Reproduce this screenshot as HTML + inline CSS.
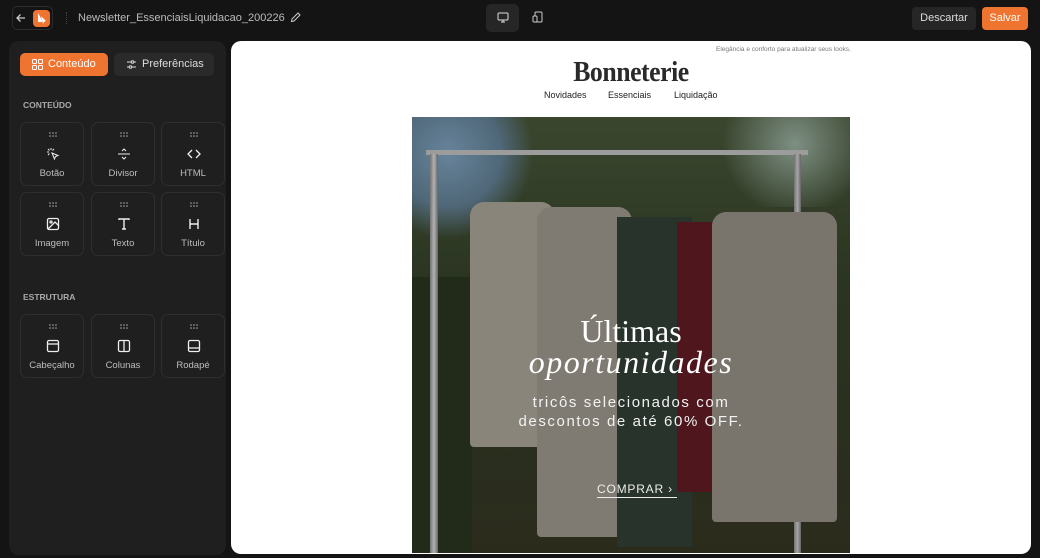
<!DOCTYPE html>
<html><head><meta charset="utf-8"><style>
*{box-sizing:border-box;margin:0;padding:0}
body{width:1040px;height:558px;background:#141414;font-family:"Liberation Sans",sans-serif;position:relative;overflow:hidden;color:#ddd}
.abs{position:absolute}
.tile{position:absolute;width:64px;height:64px;border:1px solid #2e2e2e;border-radius:7px;text-align:center;font-size:9.5px;color:#bdbdbd}
.tile .d{position:absolute;top:9px;left:28px}
.tile svg.i{position:absolute;top:24px;left:25px}
.tile .l{position:absolute;top:45px;left:0;right:0}
.sec{position:absolute;left:23px;font-size:8.5px;font-weight:bold;color:#aaa}
</style></head><body>
<svg width="0" height="0" style="position:absolute"><defs><g id="dots" fill="#aaa"><circle cx="1" cy="1" r=".8"/><circle cx="4" cy="1" r=".8"/><circle cx="7" cy="1" r=".8"/><circle cx="1" cy="4" r=".8"/><circle cx="4" cy="4" r=".8"/><circle cx="7" cy="4" r=".8"/></g></defs></svg>
<!-- top bar -->
<div class="abs" style="left:12px;top:6px;width:41px;height:24px;border:1px solid #2c2c2c;border-radius:5px"></div>
<svg class="abs" style="left:15px;top:12px" width="12" height="12" viewBox="0 0 12 12"><path d="M10 6H2M5.5 2.5L2 6l3.5 3.5" stroke="#ccc" stroke-width="1.3" fill="none"/></svg>
<div class="abs" style="left:33px;top:10px;width:17px;height:17px;background:#ee7430;border-radius:4px"></div>
<svg class="abs" style="left:36px;top:12px" width="12" height="13" viewBox="0 0 12 13"><path d="M2 1v9h5M5 4l5 5-2 1-1 2z" fill="#fff"/></svg>
<div class="abs" style="left:66px;top:12px;width:1px;height:12px;border-left:1px dotted #444"></div>
<div class="abs" style="left:78px;top:12px;font-size:11px;color:#bbb">Newsletter_EssenciaisLiquidacao_200226</div>
<svg class="abs" style="left:290px;top:12px" width="11" height="11" viewBox="0 0 11 11"><path d="M1.5 9.5l.5-2.5 6-6 2 2-6 6z" stroke="#ccc" fill="none"/></svg>
<div class="abs" style="left:486px;top:4px;width:33px;height:28px;background:#262626;border-radius:5px"></div>
<svg class="abs" style="left:497px;top:12px" width="12" height="11" viewBox="0 0 12 11"><rect x="1" y="1" width="10" height="7" rx="1" stroke="#ddd" fill="none"/><path d="M6 8v2M4 10h4" stroke="#ddd"/></svg>
<svg class="abs" style="left:532px;top:11px" width="11" height="12" viewBox="0 0 11 12"><rect x="3" y="1" width="7" height="10" rx="1" stroke="#ccc" fill="none"/><rect x="1" y="5" width="4" height="6" rx="1" stroke="#ccc" fill="#141414"/></svg>
<div class="abs" style="left:912px;top:7px;width:64px;height:23px;background:#262626;border-radius:4px;font-size:11px;color:#ddd;text-align:center;line-height:23px">Descartar</div>
<div class="abs" style="left:982px;top:7px;width:46px;height:23px;background:#ee7430;border-radius:4px;font-size:11px;color:#fff;text-align:center;line-height:23px">Salvar</div>
<!-- sidebar -->
<div class="abs" style="left:9px;top:41px;width:217px;height:514px;background:#1f1f1f;border-radius:10px"></div>
<div class="abs" style="left:20px;top:53px;width:88px;height:23px;background:#ee7430;border-radius:5px;font-size:11px;color:#fff;line-height:23px;padding-left:28px">Conteúdo</div>
<svg class="abs" style="left:32px;top:59px" width="11" height="11" viewBox="0 0 11 11" fill="none" stroke="#fff"><rect x=".5" y=".5" width="4" height="4" rx="1"/><rect x="6.5" y=".5" width="4" height="4" rx="1"/><rect x=".5" y="6.5" width="4" height="4" rx="1"/><rect x="6.5" y="6.5" width="4" height="4" rx="1"/></svg>
<div class="abs" style="left:114px;top:53px;width:100px;height:23px;background:#2a2a2a;border-radius:5px;font-size:11px;color:#ddd;line-height:23px;padding-left:28px">Preferências</div>
<svg class="abs" style="left:126px;top:59px" width="11" height="11" viewBox="0 0 11 11" fill="none" stroke="#ddd"><path d="M1 3h4M8 3h2M1 8h2M6 8h4"/><circle cx="6.5" cy="3" r="1.3"/><circle cx="4.5" cy="8" r="1.3"/></svg>
<div class="sec" style="top:100px">CONTEÚDO</div>
<div class="tile" style="left:20px;top:122px"><svg class="d" width="8" height="5"><use href="#dots"/></svg><svg class="i" width="14" height="14" viewBox="0 0 14 14" stroke="#eee" fill="none"><path d="M6 6l6 2.5-2.5 1L8.5 12z"/><path d="M5 1v2M1 5h2M2 2l1.5 1.5M8 2L6.5 3.5M2 8l1.5-1.5"/></svg><div class="l">Botão</div></div>
<div class="tile" style="left:91px;top:122px"><svg class="d" width="8" height="5"><use href="#dots"/></svg><svg class="i" width="14" height="14" viewBox="0 0 14 14" stroke="#eee" fill="none"><path d="M1 7h12M5 4l2-2 2 2M5 10l2 2 2-2"/></svg><div class="l">Divisor</div></div>
<div class="tile" style="left:161px;top:122px"><svg class="d" width="8" height="5"><use href="#dots"/></svg><svg class="i" width="14" height="14" viewBox="0 0 14 14" stroke="#eee" fill="none" stroke-width="1.3"><path d="M5 3L1 7l4 4M9 3l4 4-4 4"/></svg><div class="l">HTML</div></div>
<div class="tile" style="left:20px;top:192px"><svg class="d" width="8" height="5"><use href="#dots"/></svg><svg class="i" width="14" height="14" viewBox="0 0 14 14" stroke="#eee" fill="none" stroke-width="1.3"><rect x="1.5" y="1.5" width="11" height="11" rx="1.5"/><circle cx="5" cy="5" r="1"/><path d="M2 12l7-7 4 4"/></svg><div class="l">Imagem</div></div>
<div class="tile" style="left:91px;top:192px"><svg class="d" width="8" height="5"><use href="#dots"/></svg><svg class="i" width="14" height="14" viewBox="0 0 14 14" stroke="#eee" fill="none" stroke-width="1.4"><path d="M2 3V2h10v1M7 2v10M5 12h4"/></svg><div class="l">Texto</div></div>
<div class="tile" style="left:161px;top:192px"><svg class="d" width="8" height="5"><use href="#dots"/></svg><svg class="i" width="14" height="14" viewBox="0 0 14 14" stroke="#eee" fill="none" stroke-width="1.4"><path d="M3 2v10M11 2v10M3 7h8"/></svg><div class="l">Título</div></div>
<div class="sec" style="top:292px">ESTRUTURA</div>
<div class="tile" style="left:20px;top:314px"><svg class="d" width="8" height="5"><use href="#dots"/></svg><svg class="i" width="14" height="14" viewBox="0 0 14 14" stroke="#eee" fill="none" stroke-width="1.3"><rect x="1.5" y="1.5" width="11" height="11" rx="1.5"/><path d="M1.5 5h11"/></svg><div class="l">Cabeçalho</div></div>
<div class="tile" style="left:91px;top:314px"><svg class="d" width="8" height="5"><use href="#dots"/></svg><svg class="i" width="14" height="14" viewBox="0 0 14 14" stroke="#eee" fill="none" stroke-width="1.3"><rect x="1.5" y="1.5" width="11" height="11" rx="1.5"/><path d="M7 1.5v11"/></svg><div class="l">Colunas</div></div>
<div class="tile" style="left:161px;top:314px"><svg class="d" width="8" height="5"><use href="#dots"/></svg><svg class="i" width="14" height="14" viewBox="0 0 14 14" stroke="#eee" fill="none" stroke-width="1.3"><rect x="1.5" y="1.5" width="11" height="11" rx="1.5"/><path d="M1.5 9h11"/></svg><div class="l">Rodapé</div></div>
<!-- canvas -->
<div class="abs" style="left:231px;top:41px;width:800px;height:513px;background:#fff;border-radius:10px"></div>
<div class="abs" style="left:716px;top:46px;font-size:6.5px;color:#777">Elegância e conforto para atualizar seus looks.</div>
<div class="abs" style="left:412px;top:57px;width:438px;text-align:center;font-family:'Liberation Serif',serif;font-size:28px;font-weight:bold;color:#2a2a2a;letter-spacing:-0.5px;transform:scaleX(.92)">Bonneterie</div>
<div class="abs" style="left:544px;top:90px;font-size:9px;color:#222">Novidades</div>
<div class="abs" style="left:608px;top:90px;font-size:9px;color:#222">Essenciais</div>
<div class="abs" style="left:674px;top:90px;font-size:9px;color:#222">Liquidação</div>
<!-- photo -->
<div class="abs" style="left:412px;top:117px;width:438px;height:436px;overflow:hidden;background:linear-gradient(180deg,#4f5e3e 0%,#38462c 40%,#3a3a26 100%)">
 <div class="abs" style="left:0;top:0;width:120px;height:120px;background:radial-gradient(circle at 30% 30%,#8ab0d0,#6a8aa0 45%,transparent 72%)"></div>
 <div class="abs" style="left:300px;top:0;width:138px;height:90px;background:radial-gradient(circle at 60% 30%,#a8c0b0,transparent 70%)"></div>
 <div class="abs" style="left:0;top:160px;width:60px;height:276px;background:#2e3a22"></div>
 <div class="abs" style="left:14px;top:33px;width:382px;height:5px;background:#d0d0d0"></div>
 <div class="abs" style="left:18px;top:37px;width:8px;height:399px;background:linear-gradient(90deg,#999,#eee,#888)"></div>
 <div class="abs" style="left:382px;top:37px;width:7px;height:399px;background:linear-gradient(90deg,#999,#ddd,#888)"></div>
 <div class="abs" style="left:58px;top:85px;width:85px;height:245px;background:#b8b2a5;border-radius:14px 14px 4px 4px"></div>
 <div class="abs" style="left:125px;top:90px;width:95px;height:330px;background:#aaa599;border-radius:14px 14px 4px 4px"></div>
 <div class="abs" style="left:205px;top:100px;width:75px;height:330px;background:#34443a"></div>
 <div class="abs" style="left:265px;top:105px;width:65px;height:270px;background:#6a1e28"></div>
 <div class="abs" style="left:300px;top:95px;width:125px;height:310px;background:#a29d90;border-radius:14px 14px 4px 4px"></div>
 <div class="abs" style="left:0;top:0;width:438px;height:436px;background:rgba(0,0,0,.25)"></div>
</div>
<div class="abs" style="left:412px;top:316px;width:438px;text-align:center;font-family:'Liberation Serif',serif;color:#fff;font-size:32px;line-height:31px">Últimas<br><i style="letter-spacing:1.5px">oportunidades</i></div>
<div class="abs" style="left:402px;top:393px;width:458px;text-align:center;color:#f2f2f2;font-size:15px;letter-spacing:1.6px;line-height:19px">tricôs selecionados com<br>descontos de até 60% OFF.</div>
<div class="abs" style="left:597px;top:482px;width:80px;white-space:nowrap;font-size:12px;color:#eee;letter-spacing:.8px;border-bottom:1px solid #eee;padding-bottom:1px">COMPRAR ›</div>
</body></html>
